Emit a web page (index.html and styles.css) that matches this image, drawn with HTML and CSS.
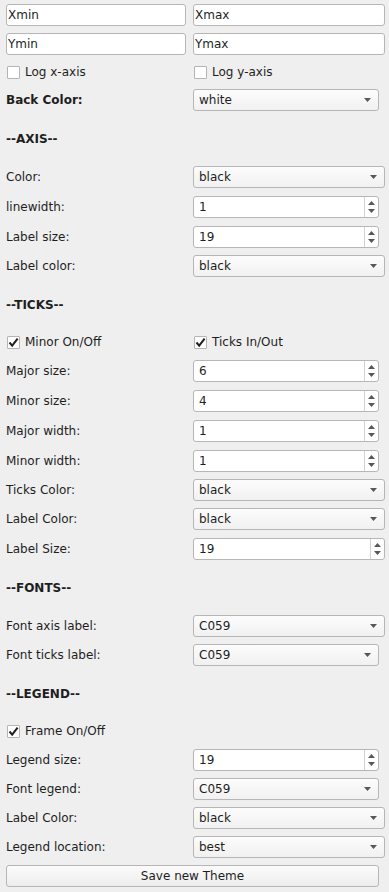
FILE: index.html
```html
<!DOCTYPE html>
<html lang="en">
<head>
    <meta charset="UTF-8"/>
    <title>Plot Theme Settings</title>
    <link rel="stylesheet" href="styles.css">
</head>
<body>
    <form class="panel" id="theme-form">
        <div class="row">
            <input class="field" type="text" value="Xmin"/>
            <input class="field narrow" type="text" value="Xmax"/>
        </div>
        <div class="row">
            <input class="field" type="text" value="Ymin"/>
            <input class="field narrow" type="text" value="Ymax"/>
        </div>
        <div class="row check-row">
            <label class="check"><span class="box"></span>Log x-axis</label>
            <label class="check"><span class="box"></span>Log y-axis</label>
        </div>
        <div class="row">
            <span class="label bold">Back Color:</span>
            <div class="combo narrow"><span>white</span><svg class="arrow" width="7" height="4" viewBox="0 0 7 4"><path d="M0 0H7L3.5 4Z"/></svg></div>
        </div>

        <div class="heading">--AXIS--</div>
        <div class="row">
            <span class="label">Color:</span>
            <div class="combo"><span>black</span><svg class="arrow" width="7" height="4" viewBox="0 0 7 4"><path d="M0 0H7L3.5 4Z"/></svg></div>
        </div>
        <div class="row spin-row">
            <span class="label">linewidth:</span>
            <div class="spin narrow"><span>1</span><div class="steps"><svg width="7" height="4" viewBox="0 0 7 4"><path d="M0 4H7L3.5 0Z"/></svg><svg width="7" height="4" viewBox="0 0 7 4"><path d="M0 0H7L3.5 4Z"/></svg></div></div>
        </div>
        <div class="row spin-row">
            <span class="label">Label size:</span>
            <div class="spin narrow"><span>19</span><div class="steps"><svg width="7" height="4" viewBox="0 0 7 4"><path d="M0 4H7L3.5 0Z"/></svg><svg width="7" height="4" viewBox="0 0 7 4"><path d="M0 0H7L3.5 4Z"/></svg></div></div>
        </div>
        <div class="row">
            <span class="label">Label color:</span>
            <div class="combo"><span>black</span><svg class="arrow" width="7" height="4" viewBox="0 0 7 4"><path d="M0 0H7L3.5 4Z"/></svg></div>
        </div>

        <div class="heading">--TICKS--</div>
        <div class="row check-row">
            <label class="check"><span class="box"><svg width="11" height="11" viewBox="0 0 11 11"><path d="M1.5 5.5L4.2 8.6L9.6 1.6"/></svg></span>Minor On/Off</label>
            <label class="check"><span class="box"><svg width="11" height="11" viewBox="0 0 11 11"><path d="M1.5 5.5L4.2 8.6L9.6 1.6"/></svg></span>Ticks In/Out</label>
        </div>
        <div class="row spin-row">
            <span class="label">Major size:</span>
            <div class="spin narrow"><span>6</span><div class="steps"><svg width="7" height="4" viewBox="0 0 7 4"><path d="M0 4H7L3.5 0Z"/></svg><svg width="7" height="4" viewBox="0 0 7 4"><path d="M0 0H7L3.5 4Z"/></svg></div></div>
        </div>
        <div class="row spin-row">
            <span class="label">Minor size:</span>
            <div class="spin narrow"><span>4</span><div class="steps"><svg width="7" height="4" viewBox="0 0 7 4"><path d="M0 4H7L3.5 0Z"/></svg><svg width="7" height="4" viewBox="0 0 7 4"><path d="M0 0H7L3.5 4Z"/></svg></div></div>
        </div>
        <div class="row spin-row">
            <span class="label">Major width:</span>
            <div class="spin narrow"><span>1</span><div class="steps"><svg width="7" height="4" viewBox="0 0 7 4"><path d="M0 4H7L3.5 0Z"/></svg><svg width="7" height="4" viewBox="0 0 7 4"><path d="M0 0H7L3.5 4Z"/></svg></div></div>
        </div>
        <div class="row spin-row">
            <span class="label">Minor width:</span>
            <div class="spin narrow"><span>1</span><div class="steps"><svg width="7" height="4" viewBox="0 0 7 4"><path d="M0 4H7L3.5 0Z"/></svg><svg width="7" height="4" viewBox="0 0 7 4"><path d="M0 0H7L3.5 4Z"/></svg></div></div>
        </div>
        <div class="row">
            <span class="label">Ticks Color:</span>
            <div class="combo"><span>black</span><svg class="arrow" width="7" height="4" viewBox="0 0 7 4"><path d="M0 0H7L3.5 4Z"/></svg></div>
        </div>
        <div class="row">
            <span class="label">Label Color:</span>
            <div class="combo"><span>black</span><svg class="arrow" width="7" height="4" viewBox="0 0 7 4"><path d="M0 0H7L3.5 4Z"/></svg></div>
        </div>
        <div class="row spin-row">
            <span class="label">Label Size:</span>
            <div class="spin"><span>19</span><div class="steps"><svg width="7" height="4" viewBox="0 0 7 4"><path d="M0 4H7L3.5 0Z"/></svg><svg width="7" height="4" viewBox="0 0 7 4"><path d="M0 0H7L3.5 4Z"/></svg></div></div>
        </div>

        <div class="heading">--FONTS--</div>
        <div class="row">
            <span class="label">Font axis label:</span>
            <div class="combo"><span>C059</span><svg class="arrow" width="7" height="4" viewBox="0 0 7 4"><path d="M0 0H7L3.5 4Z"/></svg></div>
        </div>
        <div class="row">
            <span class="label">Font ticks label:</span>
            <div class="combo narrow"><span>C059</span><svg class="arrow" width="7" height="4" viewBox="0 0 7 4"><path d="M0 0H7L3.5 4Z"/></svg></div>
        </div>

        <div class="heading">--LEGEND--</div>
        <div class="row check-row">
            <label class="check"><span class="box"><svg width="11" height="11" viewBox="0 0 11 11"><path d="M1.5 5.5L4.2 8.6L9.6 1.6"/></svg></span>Frame On/Off</label>
        </div>
        <div class="row spin-row">
            <span class="label">Legend size:</span>
            <div class="spin narrow"><span>19</span><div class="steps"><svg width="7" height="4" viewBox="0 0 7 4"><path d="M0 4H7L3.5 0Z"/></svg><svg width="7" height="4" viewBox="0 0 7 4"><path d="M0 0H7L3.5 4Z"/></svg></div></div>
        </div>
        <div class="row">
            <span class="label">Font legend:</span>
            <div class="combo narrow"><span>C059</span><svg class="arrow" width="7" height="4" viewBox="0 0 7 4"><path d="M0 0H7L3.5 4Z"/></svg></div>
        </div>
        <div class="row">
            <span class="label">Label Color:</span>
            <div class="combo"><span>black</span><svg class="arrow" width="7" height="4" viewBox="0 0 7 4"><path d="M0 0H7L3.5 4Z"/></svg></div>
        </div>
        <div class="row">
            <span class="label">Legend location:</span>
            <div class="combo"><span>best</span><svg class="arrow" width="7" height="4" viewBox="0 0 7 4"><path d="M0 0H7L3.5 4Z"/></svg></div>
        </div>
        <button class="save" type="button">Save new Theme</button>
    </form>
</body>
</html>
```

FILE: styles.css
```css
body {
    margin: 0;
    background-color: #efefef;
    color: #1e1e1e;
    font-family: 'DejaVu Sans', 'Liberation Sans', sans-serif;
    font-size: 12px;
}

.panel {
    display: flex;
    flex-direction: column;
    gap: 7px;
    padding: 4px 4px 0 6px;
}

.row {
    display: grid;
    grid-template-columns: 180px 1fr;
    column-gap: 7px;
    height: 22px;
    align-items: end;
}

.label {
    line-height: 22px;
}

.spin-row {
    height: 23px;
}

.check-row {
    height: 20px;
    align-items: center;
}

.heading {
    height: 41px;
    display: flex;
    align-items: center;
    font-weight: bold;
}

.bold {
    font-weight: bold;
}

.narrow {
    margin-right: 6px;
}

.field {
    box-sizing: border-box;
    height: 22px;
    margin: 0;
    padding: 0 1px;
    border: 1px solid #b6b6b6;
    border-radius: 3px;
    background-color: #fff;
    font: inherit;
    color: inherit;
    min-width: 0;
    outline: none;
}

.check {
    display: flex;
    align-items: center;
    gap: 5px;
    padding-left: 1px;
}

.check .box {
    box-sizing: border-box;
    width: 13px;
    height: 13px;
    border: 1px solid #b4b4b4;
    border-radius: 1px;
    background-color: #fff;
    display: flex;
    align-items: center;
    justify-content: center;
}

.check .box path {
    fill: none;
    stroke: #202020;
    stroke-width: 2;
}

.combo, .spin {
    box-sizing: border-box;
    height: 22px;
    border: 1px solid #b6b6b6;
    border-radius: 3px;
    display: flex;
    align-items: center;
    padding-left: 5px;
}

.combo {
    background: linear-gradient(#fcfcfc, #f1f1f1);
    justify-content: space-between;
    padding-right: 7px;
}

.combo .arrow path, .spin path {
    fill: #575757;
}

.spin {
    background-color: #fff;
    justify-content: space-between;
}

.spin .steps {
    align-self: stretch;
    width: 13px;
    border-left: 1px solid #d2d2d2;
    display: flex;
    flex-direction: column;
    justify-content: space-between;
    align-items: center;
    padding: 4px 0 4px;
}

.save {
    height: 22px;
    margin: 0 6px 0 0;
    border: 1px solid #b6b6b6;
    border-radius: 3px;
    background: linear-gradient(#fbfbfb, #ededed);
    font: inherit;
    color: inherit;
    padding: 0;
}
```
